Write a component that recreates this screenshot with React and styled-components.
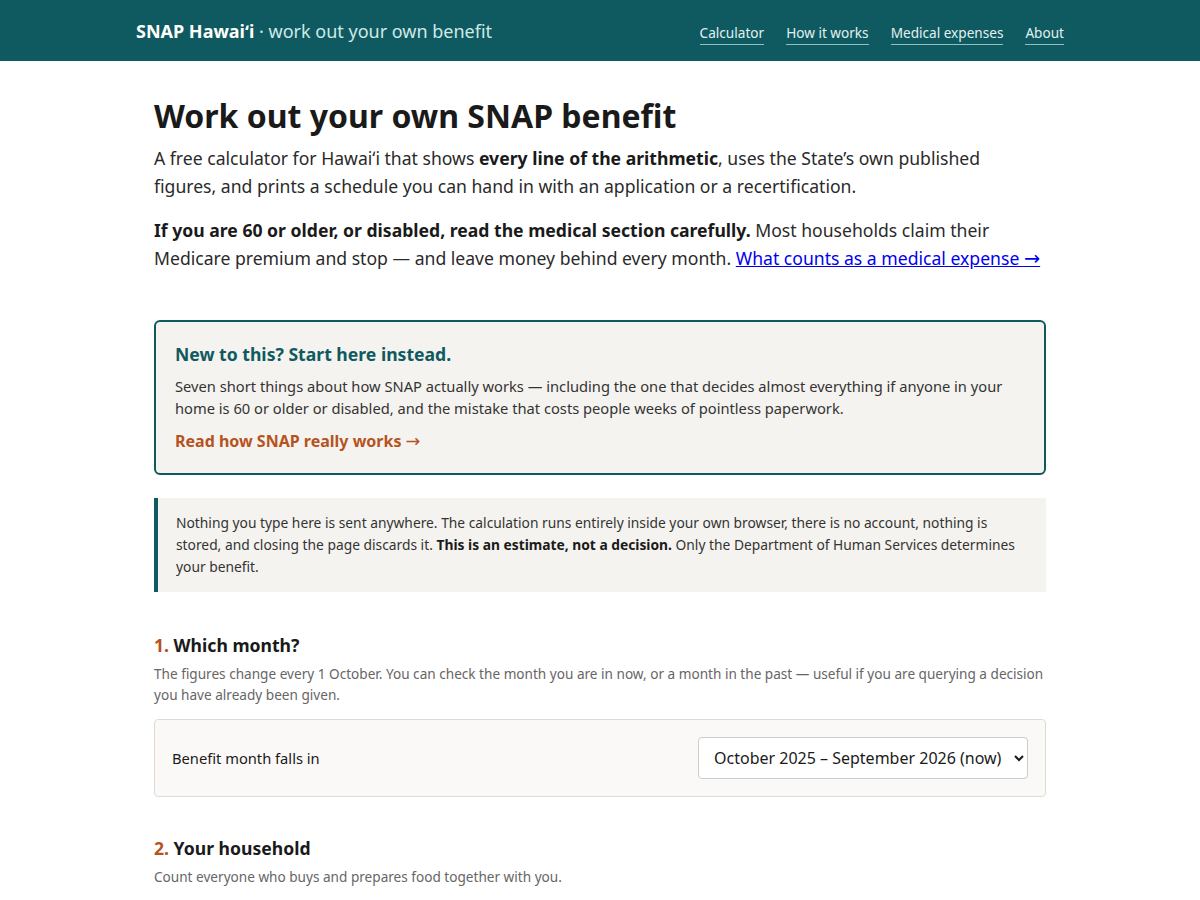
import styled, { createGlobalStyle } from "styled-components";

const GlobalStyle = createGlobalStyle`
    * { box-sizing: border-box; }
    body {
        margin: 0;
        font-family: "Noto Sans", "Open Sans", sans-serif;
        color: #1a1a1a;
        background: #fff;
    }
`;

const teal = "#0f5a60";
const rust = "#b5531f";

const Header = styled.header`
    background: ${teal};
    height: 61px;
`;

const HeaderInner = styled.div`
    max-width: 960px;
    margin: 0 auto;
    padding: 0 16px;
    height: 100%;
    display: flex;
    align-items: center;
    justify-content: space-between;
`;

const Brand = styled.div`
    font-size: 18px;
    color: #cfe9e8;
    b { color: #fff; font-weight: 700; }
`;

const Nav = styled.nav`
    display: flex;
    gap: 22px;
    margin-top: 7px;
    a {
        color: #e2f1f0;
        font-size: 13.6px;
        line-height: 20px;
        text-decoration: none;
        border-bottom: 1px solid #8fbfbf;
        padding-bottom: 1px;
    }
`;

const Main = styled.main`
    max-width: 940px;
    margin: 0 auto;
    padding: 35px 24px 40px;
`;

const Title = styled.h1`
    font-size: 32px;
    font-weight: 700;
    margin: 0 0 8px;
    line-height: 40px;
`;

const Lead = styled.p`
    font-size: 17.6px;
    line-height: 28px;
    margin: 0 0 16px;
    color: #2a2a2a;
    b { color: #1a1a1a; }
    a { color: #0000ee; }
`;

const Arrow = styled.span`
    font-family: "DejaVu Sans", sans-serif;
    font-weight: 400;
    font-size: 1.1em;
    line-height: 1;
`;

const Callout = styled.div`
    margin-top: 48px;
    border: 2px solid ${teal};
    border-radius: 6px;
    background: #f5f3ef;
    padding: 19px 19px 20px;
`;

const CalloutTitle = styled.h2`
    font-size: 17.6px;
    color: ${teal};
    margin: 0 0 8px;
    line-height: 26px;
`;

const CalloutText = styled.p`
    font-size: 14.7px;
    line-height: 22px;
    color: #333;
    margin: 0 0 10px;
`;

const CalloutLink = styled.a`
    font-size: 16px;
    font-weight: 700;
    color: ${rust};
    text-decoration: none;
    line-height: 24px;
`;

const Note = styled.div`
    margin-top: 23px;
    border-left: 4px solid ${teal};
    background: #f5f3ef;
    padding: 14px 18px 14px;
    font-size: 13.8px;
    line-height: 22px;
    color: #333;
    b { color: #1a1a1a; }
`;

const Section = styled.section`
    margin-top: ${(p) => p.$top}px;
`;

const SectionTitle = styled.h2`
    font-size: 17.6px;
    line-height: 26px;
    margin: 0 0 5px;
    span { color: ${rust}; }
`;

const SectionDesc = styled.p`
    font-size: 13.6px;
    line-height: 21px;
    color: #666;
    margin: 0 0 14px;
`;

const FieldBox = styled.div`
    border: 1px solid #dedbd5;
    border-radius: 4px;
    background: #faf9f7;
    padding: 17px;
    display: flex;
    align-items: center;
    justify-content: space-between;
`;

const Label = styled.label`
    font-size: 14.7px;
`;

const Select = styled.select`
    font-family: inherit;
    font-size: 16px;
    color: #1a1a1a;
    height: 42px;
    padding: 0 9px 0 11px;
    border: 1px solid #ccc;
    border-radius: 4px;
    background: #fff;
`;

export default function App() {
    return (
        <>
            <GlobalStyle />
            <Header>
                <HeaderInner>
                    <Brand><b>SNAP Hawaiʻi</b> · work out your own benefit</Brand>
                    <Nav>
                        <a href="#">Calculator</a>
                        <a href="#">How it works</a>
                        <a href="#">Medical expenses</a>
                        <a href="#">About</a>
                    </Nav>
                </HeaderInner>
            </Header>
            <Main>
                <Title>Work out your own SNAP benefit</Title>
                <Lead>
                    A free calculator for Hawaiʻi that shows <b>every line of the arithmetic</b>, uses the State’s own published figures, and prints a schedule you can hand in with an application or a recertification.
                </Lead>
                <Lead>
                    <b>If you are 60 or older, or disabled, read the medical section carefully.</b> Most households claim their Medicare premium and stop — and leave money behind every month. <a href="#">What counts as a medical expense <Arrow>→</Arrow></a>
                </Lead>

                <Callout>
                    <CalloutTitle>New to this? Start here instead.</CalloutTitle>
                    <CalloutText>
                        Seven short things about how SNAP actually works — including the one that decides almost everything if anyone in your home is 60 or older or disabled, and the mistake that costs people weeks of pointless paperwork.
                    </CalloutText>
                    <CalloutLink href="#">Read how SNAP really works <Arrow>→</Arrow></CalloutLink>
                </Callout>

                <Note>
                    Nothing you type here is sent anywhere. The calculation runs entirely inside your own browser, there is no account, nothing is stored, and closing the page discards it. <b>This is an estimate, not a decision.</b> Only the Department of Human Services determines your benefit.
                </Note>

                <Section $top={40}>
                    <SectionTitle><span>1.</span> Which month?</SectionTitle>
                    <SectionDesc>
                        The figures change every 1 October. You can check the month you are in now, or a month in the past — useful if you are querying a decision you have already been given.
                    </SectionDesc>
                    <FieldBox>
                        <Label htmlFor="month">Benefit month falls in</Label>
                        <Select id="month" defaultValue="now">
                            <option value="now">October 2025 – September 2026 (now)</option>
                            <option value="prev">October 2024 – September 2025</option>
                        </Select>
                    </FieldBox>
                </Section>

                <Section $top={38}>
                    <SectionTitle><span>2.</span> Your household</SectionTitle>
                    <SectionDesc>Count everyone who buys and prepares food together with you.</SectionDesc>
                </Section>
            </Main>
        </>
    );
}
